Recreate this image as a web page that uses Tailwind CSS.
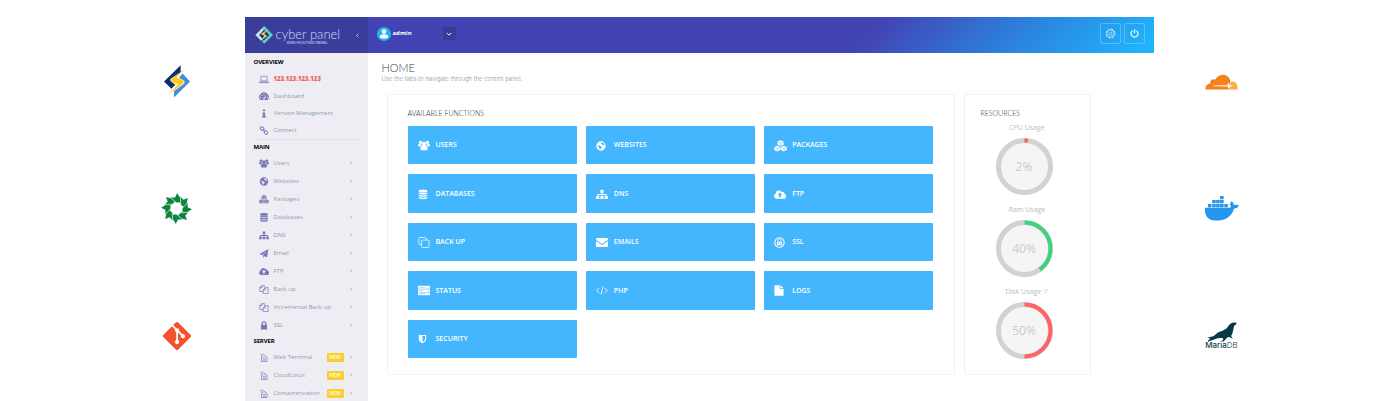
<!DOCTYPE html>
<html lang="en">
<head>
<meta charset="utf-8">
<title>CyberPanel</title>
<script src="https://cdn.jsdelivr.net/npm/@tailwindcss/browser@4"></script>
</head>
<body class="bg-white font-['Open_Sans',sans-serif]">
<svg class="hidden" aria-hidden="true">
  <symbol id="users" viewBox="0 0 18 16"><g fill="currentColor"><circle cx="9" cy="5.6" r="3.400"/><path d="M3.500 12.500c0-2.600 1.300-4.200 3.300-4.100 1.400 1 3 1 4.400 0 2-.100 3.300 1.500 3.300 4.100 0 1.700-.800 2.700-2.500 2.700H6c-1.700 0-2.500-1-2.500-2.700z"/><circle cx="3.700" cy="3.200" r="2.400"/><circle cx="14.300" cy="3.200" r="2.400"/><path d="M5 8.200c-1.100.100-1.800.600-2.400 1.400H1.900C.8 9.600.1 8.900.1 7.900c0-1.500.4-2.500 1.400-2.600 1 .9 2.300 1 3.400.500 0 1 .1 1.700.5 2.400zM13 8.200c1.100.100 1.800.600 2.400 1.400h.7c1.100 0 1.800-.700 1.800-1.700 0-1.500-.4-2.500-1.400-2.600-1 .9-2.300 1-3.400.500 0 1-.1 1.700-.5 2.400z"/></g></symbol>
  <symbol id="globe" viewBox="0 0 16 16"><path fill="currentColor" fill-rule="evenodd" d="M8 .5a7.500 7.500 0 1 0 0 15A7.500 7.500 0 0 0 8 .5zM9 2.200l3.300 1.300 1.400 2-1.500 1.300-2-.5-.8-1.500-1.600-.4zM3.200 6.200l2.300 1.500 2.800.8 1 1.800-1.600 1.700-.8 2-1.500-1.400-.3-2.300-1.800-1.700z"/></symbol>
  <symbol id="cubes" viewBox="0 0 20 18"><g fill="currentColor"><path d="M10 .2l4.700 2v4.700L10 9.100 5.300 6.900V2.200zM5 8.600l4.700 2v4.600L5 17.600.3 15.200v-4.600zM15 8.600l4.700 2v4.600L15 17.600l-4.700-2.400v-4.600z"/></g><g fill="none" class="stroke-(--cut)" stroke-width=".8"><path d="M6 2.900l4 1.700 4-1.700M10.600 4.800v3.500M1 11.200l4 1.700 4-1.700M5.600 13.200v3.500M11 11.200l4 1.700 4-1.700M15.600 13.200v3.500"/></g></symbol>
  <symbol id="database" viewBox="0 0 16 16"><g fill="currentColor"><ellipse cx="8" cy="2.500" rx="7" ry="2.400"/><path d="M1 4.300c2.500 1.900 11.500 1.900 14 0v1.600c0 2.900-14 2.900-14 0zM1 8c2.500 1.900 11.500 1.900 14 0v1.600c0 2.900-14 2.900-14 0zM1 11.700c2.500 1.900 11.500 1.900 14 0v1.600c0 2.900-14 2.900-14 0z"/></g></symbol>
  <symbol id="sitemap" viewBox="0 0 18 16"><path fill="currentColor" d="M6.600 1h4.800v4.600H9.700v1.700h5.100c.9 0 1.400.5 1.400 1.400v1.500h1.600v4.600h-4.800v-4.600h1.600V8.800H9.700v1.400h1.700v4.600H6.600v-4.600h1.700V8.800H3.400v1.400H5v4.600H.2v-4.600h1.600V8.700c0-.9.500-1.400 1.400-1.400h5.100V5.600H6.600z"/></symbol>
  <symbol id="plane" viewBox="0 0 16 16"><path fill="currentColor" d="M15.800.2l-2.400 14.500-4.500-1.900-2.400 2.900v-4.400L13 3.600 4.900 10.900.2 9z"/></symbol>
  <symbol id="cloud" viewBox="0 0 18 14"><path fill="currentColor" fill-rule="evenodd" d="M4.200 13.400A4.100 4.100 0 0 1 2.300 5.700 5.200 5.200 0 0 1 11.900 3.400c1.800-.8 4 .5 3.700 2.600a3.800 3.800 0 0 1-1.600 7.400zM8.900 4L5.300 7.600h2.200V11h2.800V7.600h2.200z"/></symbol>
  <symbol id="copy" viewBox="0 0 16 16"><path fill="none" stroke="currentColor" stroke-width="1.300" d="M6.500 11.500h-6V4.600L4.500.600h4v4M4.500.600v4h-4M10.300 4.700h5.100v10.600H6.500V8.700zv4H6.500"/></symbol>
  <symbol id="lock" viewBox="0 0 16 16"><path fill="currentColor" fill-rule="evenodd" d="M3.500 7V5a4.500 4.500 0 0 1 9 0v2h1v8.200h-11V7zm2.200 0h4.600V5a2.300 2.300 0 0 0-4.600 0z"/></symbol>
  <symbol id="doc" viewBox="0 0 16 16"><path fill="none" stroke="currentColor" stroke-width="1.300" d="M2 1.500l4.500 6M5 1.500l8.500 6.500v7H3.500V6M6 10l5-1M6 12.500h5.500"/></symbol>
  <symbol id="laptop" viewBox="0 0 18 14"><path fill="none" stroke="currentColor" stroke-width="1.300" d="M3.300 1.200h11.400v8.300H3.300zM.7 11.300h16.600v1.300H.7z"/></symbol>
  <symbol id="gauge" viewBox="0 0 18 14"><path fill="currentColor" fill-rule="evenodd" d="M2.200 13.500A8.500 8.500 0 1 1 15.800 13.500zM7.500 11.500a1.700 1.700 0 0 0 3.200-.9L12.500 5l-1-.4L9.300 9.400a1.700 1.700 0 0 0-1.800 2.100zM2 8h2v2H2zM4 3.800h2v2H4zM8 2h2v2H8zM14 8h2v2h-2z"/></symbol>
  <symbol id="info" viewBox="0 0 16 16"><path fill="currentColor" d="M6 1h4v3.200H6zM4.800 6H10v7h1.500v2h-7v-2H6V8H4.800z"/></symbol>
  <symbol id="link" viewBox="0 0 16 16"><g fill="none" stroke="currentColor" stroke-width="1.700"><rect x="1.500" y="2" width="6.500" height="5" rx="2" transform="rotate(45 4.700 4.500)"/><rect x="8.200" y="9" width="6.500" height="5" rx="2" transform="rotate(45 11.400 11.500)"/><path d="M6 6l4.500 4.500"/></g></symbol>
  <symbol id="squares" viewBox="0 0 18 18"><g fill="none" stroke="currentColor" stroke-width="1.200"><path d="M5 12.500H2.500a1.800 1.800 0 0 1-1.800-1.800V2.500A1.800 1.800 0 0 1 2.500.700h8.200a1.800 1.800 0 0 1 1.800 1.800V5"/><rect x="5" y="5" width="12.200" height="12.200" rx="1.500"/></g></symbol>
  <symbol id="server" viewBox="0 0 18 16"><g fill="currentColor"><rect y="1" width="18" height="4.200" rx=".5"/><rect y="6" width="18" height="4.200" rx=".5"/><rect y="11" width="18" height="4.200" rx=".5"/></g><path class="stroke-(--cut)" stroke-width=".7" d="M1.500 3.100h9M1.500 8.100h6M1.500 13.100h9M15 3.100h1.200M15 8.100h1.200M15 13.100h1.200"/></symbol>
  <symbol id="shield" viewBox="0 0 16 16"><path fill="currentColor" fill-rule="evenodd" d="M1.500.8h13v7c0 3.900-3.200 6.200-6.500 7.700-3.300-1.500-6.500-3.800-6.500-7.700zM8 2.800v10.400c2.300-1.200 4.500-2.800 4.500-5.400v-5z"/></symbol>
  <symbol id="mail" viewBox="0 0 18 14"><path fill="currentColor" d="M1.200.3h15.600c.7 0 1.200.6 1.200 1.300 0 1-.7 1.800-1.400 2.300L9.900 8.500c-.6.400-1.200.4-1.800 0L1.400 3.900C.6 3.400 0 2.500 0 1.600 0 .9.500.3 1.200.3zM0 4.800l7.600 5.100c.9.600 1.900.6 2.800 0L18 4.800v7.600c0 .8-.6 1.400-1.400 1.400H1.400C.6 13.800 0 13.200 0 12.400z"/></symbol>
  <symbol id="code" viewBox="0 0 18 14"><path fill="none" stroke="currentColor" stroke-width="1.300" d="M5 3L1 7l4 4M13 3l4 4-4 4M10.500 1l-3 12"/></symbol>
  <symbol id="sslmark" viewBox="0 0 18 18"><g fill="none" stroke="currentColor"><circle cx="9" cy="9" r="7.700" stroke-width="1.700"/><path stroke-width="1.400" d="M6.500 8V6a2.500 2.500 0 0 1 5 0v2"/></g><path fill="currentColor" fill-rule="evenodd" d="M4.700 7.600h8.600v5.700H4.700zM6.300 9v2.900h1.300V9zm4.100 0v2.900h1.300V9z"/></symbol>
  <symbol id="file" viewBox="0 0 16 18"><path fill="currentColor" d="M.5.500h8.700v5.900h6.300v11H.5zM10.300.500l5.200 4.800h-5.200z"/></symbol>
  <symbol id="right" viewBox="0 0 8 8"><path fill="none" stroke="currentColor" stroke-width="1.300" d="M2.500 1l3 3-3 3"/></symbol>
</svg>

<div class="flex h-screen justify-center overflow-hidden pt-[17px]">
  <!-- Left partner logos -->
  <aside class="mr-[51px] grid w-[34px] shrink-0 auto-rows-[127px] place-items-center self-start pt-px" aria-label="Integrations">
    <svg class="h-[33px] w-[26px]" viewBox="42 33 78 98" role="img" aria-label="LiteSpeed">
      <path fill="#0c2f73" d="M92 33L42 82l22 22 12-12-13-10c-3-3-3-6 0-9l29-19z"/><path fill="#3f8fdd" d="M98 58l22 24-48 48V111l28-21c5-4 5-8 1-11l-14-8z"/><path fill="#fccb1c" d="M105 44L66 73c-5 4-4 9 1 11l17 6-28 32 42-33c5-5 4-9-2-12l-17-6z"/>
    </svg>
    <svg class="size-[31px]" viewBox="-46 -46 92 92" role="img" aria-label="OpenLiteSpeed">
      <path id="blade" fill="#0a8540" d="M2-46L17-20 0-17-13-24-19-33-4-33z"/>
      <use href="#blade" transform="rotate(45)"/><use href="#blade" transform="rotate(90)"/><use href="#blade" transform="rotate(135)"/><use href="#blade" transform="rotate(180)"/><use href="#blade" transform="rotate(225)"/><use href="#blade" transform="rotate(270)"/><use href="#blade" transform="rotate(315)"/>
      <path stroke="#fff" stroke-width="2" d="M-19-34l21 19M-38-11l29 -2M-34 19l19-21M-11 38l-2-29M19 34l-21-19M38 11l-29 2M34-19l-19 21M11-38l2 29"/>
    </svg>
    <svg class="size-[28px]" viewBox="0 0 24 24" role="img" aria-label="Git"><path fill="#f4512c" d="M23.546 10.930L13.067.452c-.604-.603-1.582-.603-2.188 0L8.708 2.627l2.760 2.760c.645-.215 1.379-.070 1.889.441.516.515.658 1.258.438 1.900l2.658 2.660c.645-.223 1.387-.078 1.900.435.721.720.721 1.884 0 2.604-.719.719-1.881.719-2.600 0-.539-.541-.674-1.337-.404-1.996L12.860 8.955v6.525c.176.086.342.203.488.348.713.721.713 1.883 0 2.600-.719.721-1.889.721-2.609 0-.719-.719-.719-1.879 0-2.598.182-.180.387-.316.605-.406V8.835c-.217-.091-.424-.222-.600-.401-.545-.545-.676-1.342-.396-2.009L7.636 3.700.450 10.881c-.600.605-.600 1.584 0 2.189l10.480 10.477c.604.604 1.582.604 2.186 0l10.430-10.430c.605-.603.605-1.582 0-2.187"/></svg>
  </aside>

  <div class="flex min-w-0 max-w-[909px] grow flex-col">
    <header class="flex h-[36px] shrink-0 bg-[linear-gradient(135deg,#4244b4_0%,#4244b4_68%,#2b86e0_85%,#1fb8ff_100%)]">
      <div class="flex w-[123px] shrink-0 items-center bg-[#3b3d9a] pl-[10px] text-[#d3d6fa]">
        <svg class="size-[18px]" viewBox="45 49 54 54" aria-hidden="true">
          <path fill="#c4e6ee" d="M72 50L46 76l17 17 6-5-11-12 20-19z"/><path fill="#55cfc5" d="M74 50l25 26-26 26-8-8 8-3 14-15-13-15-8-5z"/><path fill="#23307f" d="M72 60l15 16-15 15-14-15z"/><path fill="#f2cf38" d="M82 60L62 73l11 5-9 14 18-13-9-6z"/>
        </svg>
        <div class="ml-[3px] w-[62px] pt-[2px] font-['Lato',sans-serif]">
          <p class="text-[13px] leading-[14px] font-light whitespace-nowrap">cyber panel</p>
          <p class="pl-[11px] text-[4px] leading-[4px] font-normal whitespace-nowrap">WEB HOSTING PANEL</p>
        </div>
        <button class="ml-[17px]" aria-label="Collapse menu"><svg class="size-[5px] rotate-180"><use href="#right"/></svg></button>
      </div>
      <div class="flex grow items-center pr-[9px] pb-[3px] pl-[9px] text-white">
        <svg class="size-[14px]" viewBox="0 0 26 26" aria-hidden="true"><circle cx="13" cy="13" r="13" fill="#20b5ee"/><circle cx="13" cy="8.500" r="4.300" fill="#fff"/><path fill="#fff" d="M5 19c0-4 3-5.500 8-5.500s8 1.500 8 5.500c-2 3-14 3-16 0z"/></svg>
        <span class="ml-[2px] w-[50px] text-[6px] font-bold">admin</span>
        <button class="grid size-[13px] place-items-center rounded-[1px] bg-[#393b97]" aria-label="Account menu"><svg class="size-[6px] rotate-90"><use href="#right"/></svg></button>
        <div class="ml-auto flex gap-[3px]">
          <button class="grid size-[21px] place-items-center rounded-[2px] border border-white/25" aria-label="Settings"><svg class="size-[11px]" viewBox="0 0 22 22" fill="none" stroke="#cdebfd" stroke-width="1.500"><circle cx="11" cy="11" r="9" stroke-width="2" stroke-dasharray="4 3.070"/><circle cx="11" cy="11" r="7.300"/><circle cx="11" cy="11" r="3"/></svg></button>
          <button class="grid size-[21px] place-items-center rounded-[2px] border border-white/25" aria-label="Log out"><svg class="size-[9px]" viewBox="0 0 18 18" fill="none" stroke="#e0f3ff" stroke-width="2.800"><path d="M5 3.400a7 7 0 1 0 8 0M9 .5v8"/></svg></button>
        </div>
      </div>
    </header>

    <div class="flex min-h-0 grow">
      <nav class="w-[123px] shrink-0 overflow-hidden bg-[#eeedf4] text-[6px] font-medium text-[#8c9fab]" aria-label="Main">
        <h2 class="pl-[9px] text-[6px] leading-[18px] font-bold tracking-tight text-black">OVERVIEW</h2>
        <ul class="mx-[9px] border-b border-[#e2e2ea]" id="overview"></ul>
        <h2 class="pl-[9px] text-[6px] leading-[14px] font-bold tracking-tight text-black">MAIN</h2>
        <ul class="mx-[9px]" id="main"></ul>
        <h2 class="pl-[9px] text-[6px] leading-[14px] font-bold tracking-tight text-black">SERVER</h2>
        <ul class="mx-[9px]" id="server-menu"></ul>
      </nav>

      <main class="min-w-0 grow pr-[63px] pl-[14px]">
        <h1 class="mt-[8px] font-['Lato',sans-serif] text-[11px] leading-[14px] font-light text-[#343e49]">HOME</h1>
        <p class="font-['Inter',sans-serif] text-[6px] leading-[8px] font-light text-[#8d9299]">Use the tabs to navigate through the control panel.</p>
        <div class="mt-[11px] ml-[5px] flex items-stretch gap-[9px]">
          <section class="grow rounded-[2px] border border-[#eff3f9] px-[20px] pt-[13px] pb-[16px]">
            <h2 class="font-['Lato',sans-serif] text-[7px] leading-[10px] font-light text-[#26303b]">AVAILABLE FUNCTIONS</h2>
            <div class="mt-[8px] grid h-[232px] auto-rows-fr grid-cols-3 gap-x-[9px] gap-y-[10px]" id="functions"></div>
          </section>
          <section class="w-[127px] shrink-0 rounded-[2px] border border-[#eff3f9] px-[16px] pt-[13px]">
            <h2 class="font-['Lato',sans-serif] text-[7px] leading-[10px] font-light text-[#26303b]">RESOURCES</h2>
            <div class="mt-[3px] flex flex-col gap-[8px]" id="resources"></div>
          </section>
        </div>
      </main>
    </div>
  </div>

  <!-- Right partner logos -->
  <aside class="ml-[51px] grid w-[34px] shrink-0 auto-rows-[127px] place-items-center self-start pt-px" aria-label="Services">
    <svg class="h-[16px] w-[33px]" viewBox="44 41 100 47" role="img" aria-label="Cloudflare"><path fill="#f6821f" d="M45 87c-1-11 6-17 15-18-1-12 8-15 15-11 6-15 26-21 38-10 7 6 9 14 7 20l8 5-8 14z"/><path fill="#fbad41" d="M118 87l6-24c12-2 20 8 19 24z"/><path fill="#fff" d="M70 75l42-1 4-9 3 8 10 3-9 3-3 8-5-9-42-1z"/></svg>
    <svg class="h-[25px] w-[34px]" viewBox="44 408 104 76" role="img" aria-label="Docker"><path fill="#2496ed" d="M90 408h11v10H90zM66 420h11v10H66zM78 420h11v10H78zM90 420h11v10H90zM53 432h11v10H53zM66 432h11v10H66zM78 432h11v10H78zM90 432h11v10H90zM103 432h11v10h-11zM44 444h72c5 0 7-2 7-4-4-6-2-12 2-16 5 3 7 7 7 11 5-1 11-1 16 2-3 6-8 9-15 9-9 28-29 37-55 37-24 0-36-14-34-39z"/></svg>
    <div class="flex flex-col items-center text-[#163c4c]" role="img" aria-label="MariaDB">
      <svg class="h-[20px] w-[30px]" viewBox="50 786 92 60" aria-hidden="true"><path fill="#063849" d="M141 788c-1 5-3 7-8 9-2 10-3 22-9 31l5 8-12-5c-6 2-10 6-15 13l-6 2 4-10c-7-3-17-1-26 2-8 3-15 4-20 8l-2-3 8-6-8-4c9-2 15-2 21-6 12-16 30-11 41-27 5-8 10-13 19-13z"/></svg>
      <p class="font-['Inter',sans-serif] text-[8px] leading-[7px]"><span class="font-medium">Maria</span><span class="font-light">DB</span></p>
    </div>
  </aside>
</div>

<script>
const icon = (name, cls) => `<svg class="${cls}" aria-hidden="true"><use href="#${name}"/></svg>`;

const row = (h, [name, label, mode]) => `<li><a href="#" class="flex items-center ${h}">
  <span class="grid w-[20px] place-items-center text-[#7778b8] [--cut:#eeedf4]">${icon(name, 'h-[9px] w-[10px]')}</span>
  <span class="whitespace-nowrap ${mode === 'ip' ? 'font-extrabold text-[#f0605f]' : ''}">${label}</span>
  <span class="ml-auto flex items-center gap-[5px]">
    ${mode === 'new' ? '<span class="w-[17px] rounded-[1px] bg-[#ffcd2a] text-center text-[5px] leading-[9px] font-semibold text-white">NEW</span>' : ''}
    ${mode === 'sub' || mode === 'new' ? icon('right', 'mr-[6px] size-[4px]') : ''}
  </span></a></li>`;

document.getElementById('overview').innerHTML = [
  ['laptop', '123.123.123.123', 'ip'], ['gauge', 'Dashboard'], ['info', 'Version Management'], ['link', 'Connect']
].map(r => row('h-[17px]', r)).join('');

document.getElementById('main').innerHTML = [
  ['users', 'Users'], ['globe', 'Websites'], ['cubes', 'Packages'], ['database', 'Databases'], ['sitemap', 'DNS'],
  ['plane', 'Email'], ['cloud', 'FTP'], ['copy', 'Back up'], ['copy', 'Incremental Back up'], ['lock', 'SSL']
].map(r => row('h-[18px]', [...r, 'sub'])).join('');

document.getElementById('server-menu').innerHTML = ['Web Terminal', 'CloudLinux', 'Containerization']
  .map(t => row('h-[18px]', ['doc', t, 'new'])).join('');

document.getElementById('functions').innerHTML = [
  ['users', 'USERS'], ['globe', 'WEBSITES'], ['cubes', 'PACKAGES'], ['database', 'DATABASES'], ['sitemap', 'DNS'],
  ['cloud', 'FTP'], ['squares', 'BACK UP'], ['mail', 'EMAILS'], ['sslmark', 'SSL'], ['server', 'STATUS'],
  ['code', 'PHP'], ['file', 'LOGS'], ['shield', 'SECURITY']
].map(([n, t]) => `<a href="#" class="flex items-center rounded-[1px] bg-[#43b6fe] pt-px pl-[10px] text-[7px] font-semibold text-white [--cut:#43b6fe]">
  <span class="w-[18px]">${icon(n, { cubes: 'h-[12px] w-[13px]', shield: 'h-[10px] w-[9px]', globe: 'size-[10px]', database: 'h-[11px] w-[10px]', file: 'h-[11px] w-[10px]', sslmark: 'size-[11px]' }[n] || 'h-[11px] w-[12px]')}</span>${t}</a>`).join('');

document.getElementById('resources').innerHTML = [
  ['CPU Usage', 2, '#fb5b5b'], ['Ram Usage', 40, '#3fd080'], ["Disk Usage '/'", 50, '#ff6363']
].map(([t, v, c]) => `<div>
  <p class="text-center text-[7px] leading-[14px] text-[#bdbdbd]">${t}</p>
  <div class="mt-[3px] mr-[6px] grid place-items-center">
    <svg class="col-start-1 row-start-1 size-[57px]" viewBox="0 0 57 57" fill="none" stroke-width="5" aria-hidden="true">
      <circle cx="28.500" cy="28.500" r="26" fill="#f5f5f5" stroke="#d2d2d2"/>
      <circle cx="28.500" cy="28.500" r="26" stroke="${c}" stroke-width="4" pathLength="100" stroke-dasharray="${v} 100" transform="rotate(-90 28.500 28.500)"/>
    </svg>
    <span class="col-start-1 row-start-1 text-[12px] text-[#cbcbcb]">${v}%</span>
  </div></div>`).join('');
</script>
</body>
</html>
